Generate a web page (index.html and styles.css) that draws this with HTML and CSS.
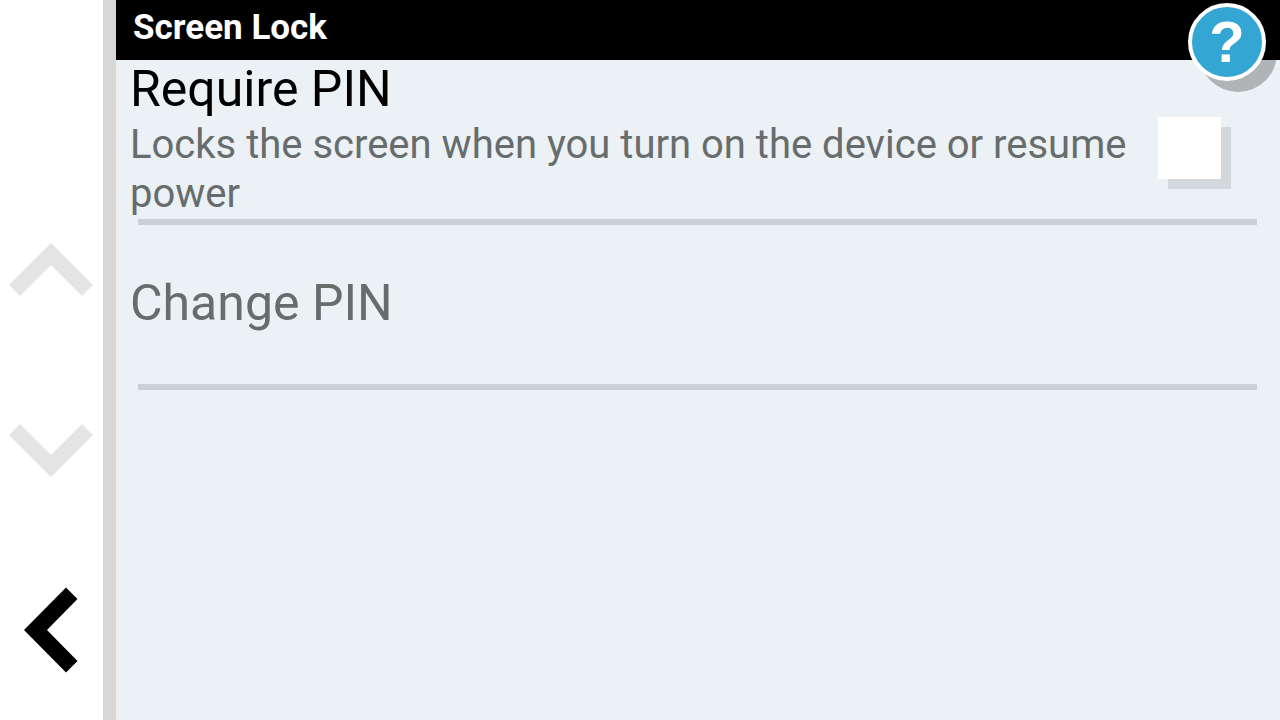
FILE: index.html
```html
<!DOCTYPE html>
<html lang="en">
<head>
    <meta charset="UTF-8">
    <meta name="viewport" content="width=device-width, initial-scale=1.0">
    <title>Screen Lock</title>
    <link rel="stylesheet" href="styles.css">
</head>
<body>
    <nav class="sidebar">
        <button class="nav-btn nav-up" aria-label="Scroll up" disabled>
            <svg width="84" height="54" viewBox="0 0 84 54"><path d="M42 0L84 42 73 53 42 22 11 53 0 42Z"/></svg>
        </button>
        <button class="nav-btn nav-down" aria-label="Scroll down" disabled>
            <svg width="84" height="54" viewBox="0 0 84 54"><path d="M42 54L84 12 73 1 42 32 11 1 0 12Z"/></svg>
        </button>
        <button class="nav-btn nav-back" aria-label="Back">
            <svg width="54" height="86" viewBox="0 0 54 86"><path d="M0 43L42 0.500 53.500 12 23 43 53.500 74 42 85.500Z"/></svg>
        </button>
    </nav>

    <div class="screen">
        <header class="header">
            <h1 class="header-title">Screen Lock</h1>
            <button class="help-btn" aria-label="Help">?</button>
        </header>

        <main class="settings">
            <div class="setting">
                <label class="setting-text" for="requirePin">
                    <span class="setting-title">Require PIN</span>
                    <span class="setting-info">Locks the screen when you turn on the device or resume power</span>
                </label>
                <input type="checkbox" id="requirePin" class="setting-check">
            </div>
            <button class="setting setting-centered" disabled>
                <span class="setting-title">Change PIN</span>
            </button>
        </main>
    </div>
</body>
</html>
```

FILE: styles.css
```css
* {
    box-sizing: border-box;
}

body {
    margin: 0;
    min-height: 100vh;
    display: flex;
    font-family: Roboto, sans-serif;
    background: #ebf1f5;
    color: #000;
}

button {
    font-family: inherit;
    border: none;
    padding: 0;
}

.sidebar {
    flex: none;
    width: 116px;
    display: grid;
    grid-template-rows: repeat(4, 1fr);
    padding-right: 2px;
    background: #fff;
    border-right: 13px solid #d7d7d7;
}

.nav-btn {
    display: flex;
    align-items: center;
    justify-content: center;
    background: none;
    color: #000;
}

.nav-btn:disabled {
    color: #e4e4e4;
}

.nav-btn svg {
    fill: currentColor;
}

.nav-up {
    grid-row: 2;
}

.nav-down {
    grid-row: 3;
}

.nav-back {
    grid-row: 4;
}

.screen {
    flex: 1;
    min-width: 0;
}

.header {
    position: relative;
    height: 60px;
    padding: 0 17px;
    background: #000;
}

.header-title {
    margin: 0;
    font-size: 35px;
    line-height: 56px;
    font-weight: bold;
    color: #fff;
}

/* hangs over the header and the first row */
.help-btn {
    position: absolute;
    top: 3px;
    right: 14px;
    width: 78px;
    height: 78px;
    border: 4px solid #fff;
    border-radius: 50%;
    background: #34a6d3;
    box-shadow: 11px 11px 0 rgba(0, 0, 0, 0.25);
    color: #fff;
    font-family: "Liberation Sans", Arial, sans-serif;
    font-size: 58px;
    line-height: 70px;
    font-weight: bold;
}

.settings {
    display: flex;
    flex-direction: column;
    padding: 0 23px 0 14px;
}

.setting {
    position: relative;
    display: flex;
    align-items: flex-start;
    gap: 20px;
    min-height: 165px;
    padding-bottom: 6px;
    background: none;
    text-align: left;
    color: #000;
}

.setting::after {
    content: "";
    position: absolute;
    left: 8px;
    right: 0;
    bottom: 0;
    height: 6px;
    background: #cad0d4;
}

.setting:disabled {
    color: #676c6d;
}

.setting-centered {
    align-items: center;
    padding-bottom: 10px;
}

.setting-text {
    flex: 1;
}

.setting-title {
    display: block;
    font-size: 50px;
    line-height: 58px;
}

.setting-info {
    display: block;
    margin-top: 2px;
    font-size: 40px;
    line-height: 49px;
    color: #676c6d;
}

.setting-check {
    appearance: none;
    flex: none;
    width: 63px;
    height: 62px;
    margin: 57px 36px 0 0;
    background: #fff;
    box-shadow: 10px 10px 0 #d2d8dc;
}

.setting-check:checked {
    background: #34a6d3;
    border: 8px solid #fff;
}
```
